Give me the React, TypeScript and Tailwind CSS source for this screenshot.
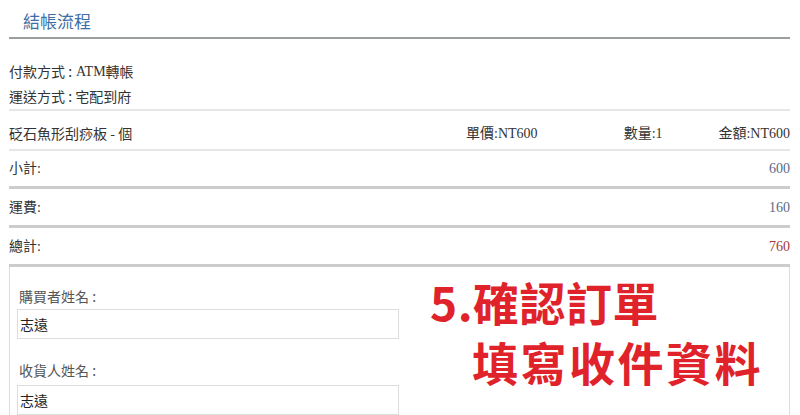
import React from "react";

const body = { fontFamily: '"Liberation Serif", "Noto Sans CJK TC", serif' };
const sans = { fontFamily: '"Noto Sans CJK TC", "Noto Sans", sans-serif' };

export default function App() {
  return (
    <div className="w-[800px] h-[415px] overflow-hidden bg-white relative" style={body}>
      <div className="ml-[9px] w-[781px]">
        {/* Title */}
        <div className="h-[39px] pt-[5px] pl-[14px] flex items-center border-b-2 border-[#9a9e9e]">
          <span className="text-[17px] leading-[24px] text-[#3d6ea6]" style={sans}>結帳流程</span>
        </div>

        {/* Payment / shipping */}
        <div className="pt-[20px] border-b-2 border-[#e6e6e6] text-[14px] text-[#333]">
          <div className="h-[25px] flex items-center">
            <span style={sans}>付款方式 :</span>
            <span className="ml-[4px]">ATM</span>
            <span style={sans}>轉帳</span>
          </div>
          <div className="h-[25px] flex items-center">
            <span style={sans}>運送方式 : 宅配到府</span>
          </div>
        </div>

        {/* Product */}
        <div className="h-[40px] pt-[6px] flex items-center border-b-2 border-[#e6e6e6] text-[14px] text-[#333] whitespace-nowrap">
          <div className="w-[458px]" style={sans}>砭石魚形刮痧板 - 個</div>
          <div className="w-[158px]">單價:NT600</div>
          <div className="w-[95px]">數量:1</div>
          <div className="flex-1 text-right">金額:NT600</div>
        </div>

        {/* Sums */}
        <div className="h-[38px] flex items-center justify-between border-b-[3px] border-[#cccccc] text-[14px] text-[#333]">
          <span>小計:</span>
          <span className="text-[#5a6a86]">600</span>
        </div>
        <div className="h-[39px] flex items-center justify-between border-b-[3px] border-[#cccccc] text-[14px] text-[#333]">
          <span>運費:</span>
          <span className="text-[#5a6a86]">160</span>
        </div>
        <div className="h-[39px] flex items-center justify-between border-b-[3px] border-[#cccccc] text-[14px] text-[#333]">
          <span>總計:</span>
          <span className="text-[#a23a36]">760</span>
        </div>

        {/* Form box */}
        <div className="border-x border-[#dddddd] h-[160px] pl-[7px] pt-[19px] text-[14px] text-[#555]">
          <div className="h-[20px] leading-[20px] pl-[2px]" style={sans}>購買者姓名 :</div>
          <div className="mt-[3px] w-[382px] h-[30px] border border-[#dddddd] flex items-center pl-[2px] text-[#222]" style={sans}>志遠</div>
          <div className="mt-[21px] h-[20px] leading-[20px] pl-[2px]" style={sans}>收貨人姓名 :</div>
          <div className="mt-[5px] w-[382px] h-[30px] border border-[#dddddd] flex items-center pl-[2px] text-[#222]" style={sans}>志遠</div>
        </div>
      </div>

      {/* Overlay annotation */}
      <div className="absolute left-[430px] top-[271px] text-[#e0232b] font-bold" style={sans}>
        <div className="text-[46px] leading-[60px] tracking-[0.5px]">5.確認訂單</div>
        <div className="text-[46px] leading-[60px] pl-[42px] tracking-[2.5px]">填寫收件資料</div>
      </div>
    </div>
  );
}
